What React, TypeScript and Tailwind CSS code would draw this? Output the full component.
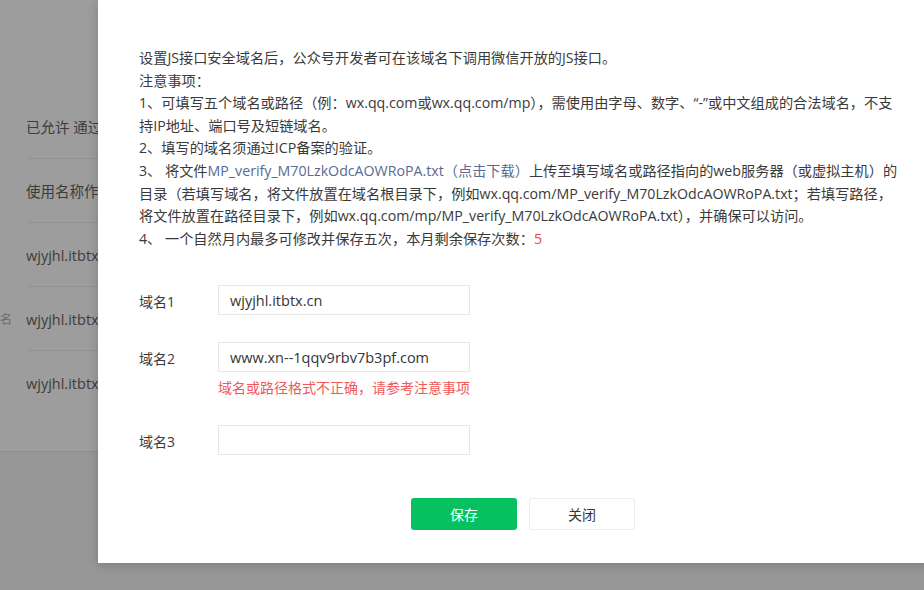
import React from 'react';

const backRows = [
    { text: '已允许 通过', side: '' },
    { text: '使用名称作为', side: '' },
    { text: 'wjyjhl.itbtx.cn', side: '' },
    { text: 'wjyjhl.itbtx.cn', side: '名' },
    { text: 'wjyjhl.itbtx.cn', side: '' },
];

const fields = [
    { label: '域名1', value: 'wjyjhl.itbtx.cn', error: '' },
    { label: '域名2', value: 'www.xn--1qqv9rbv7b3pf.com', error: '域名或路径格式不正确，请参考注意事项' },
    { label: '域名3', value: '', error: '' },
];

const VerifyLink = () => (
    <span className="text-[#576b95]">MP_verify_M70LzkOdcAOWRoPA.txt</span>
);

export default function App() {
    return (
        <div className="relative h-[590px] w-[924px] overflow-hidden bg-[#979797] font-['Open_Sans','Noto_Sans_CJK_SC',sans-serif]">
            {/* page behind the mask */}
            <div className="h-[452px] border-b border-[#8f8f8f] bg-[#9d9d9d] pt-[95px]">
                {backRows.map((row, i) => (
                    <div
                        key={i}
                        className={`relative flex h-[64px] items-center pl-[26px] pt-[2px] ${i < backRows.length - 1 ? 'after:absolute after:bottom-0 after:left-[28px] after:right-0 after:h-px after:bg-[#919191]' : ''}`}
                    >
                        {row.side && (
                            <span className="absolute left-0 text-[12px] text-[#6b6b6b]">{row.side}</span>
                        )}
                        <span className="whitespace-nowrap text-[14.5px] text-[#3c3c3c]">{row.text}</span>
                    </div>
                ))}
            </div>

            {/* dialog */}
            <div className="absolute left-[98px] top-0 w-[900px] bg-white pb-[33px] pl-[41px] pt-[47px] shadow-[0_2px_10px_rgba(0,0,0,0.18)]">
                <p className="whitespace-nowrap text-[14.2px] leading-[22.6px] text-[#3a3a3a]">
                    设置JS接口安全域名后，公众号开发者可在该域名下调用微信开放的JS接口。
                    <br />
                    注意事项：
                    <br />
                    1、可填写五个域名或路径（例：wx.qq.com或wx.qq.com/mp），需使用由字母、数字、“-”或中文组成的合法域名，不支
                    <br />
                    持IP地址、端口号及短链域名。
                    <br />
                    2、填写的域名须通过ICP备案的验证。
                    <br />
                    3、 将文件<VerifyLink /><span className="text-[#576b95]">（点击下载）</span>上传至填写域名或路径指向的web服务器（或虚拟主机）的
                    <br />
                    目录（若填写域名，将文件放置在域名根目录下，例如wx.qq.com/MP_verify_M70LzkOdcAOWRoPA.txt；若填写路径，
                    <br />
                    将文件放置在路径目录下，例如wx.qq.com/mp/MP_verify_M70LzkOdcAOWRoPA.txt），并确保可以访问。
                    <br />
                    4、 一个自然月内最多可修改并保存五次，本月剩余保存次数：<span className="text-[#e64340]">5</span>
                </p>

                <div className="mt-[35px] flex flex-col gap-[27px]">
                    {fields.map((f) => (
                        <div key={f.label}>
                            <div className="flex items-center">
                                <label className="w-[79px] pt-[3px] text-[14px] text-[#3a3a3a]">{f.label}</label>
                                <input
                                    readOnly
                                    value={f.value}
                                    className="h-[30px] w-[252px] border border-[#e7e7e7] bg-white px-[11px] text-[14.5px] text-[#353535] outline-none"
                                />
                            </div>
                            {f.error && (
                                <div className="ml-[79px] mt-[6px] text-[14px] leading-[20px] text-[#f0585a]">{f.error}</div>
                            )}
                        </div>
                    ))}
                </div>

                <div className="ml-[272px] mt-[43px] flex gap-[12px]">
                    <button className="h-[32px] w-[106px] rounded-[3px] bg-[#07c160] text-[14px] text-white">保存</button>
                    <button className="h-[32px] w-[106px] rounded-[3px] border border-[#ececec] bg-white text-[14px] text-[#353535]">
                        关闭
                    </button>
                </div>
            </div>
        </div>
    );
}
